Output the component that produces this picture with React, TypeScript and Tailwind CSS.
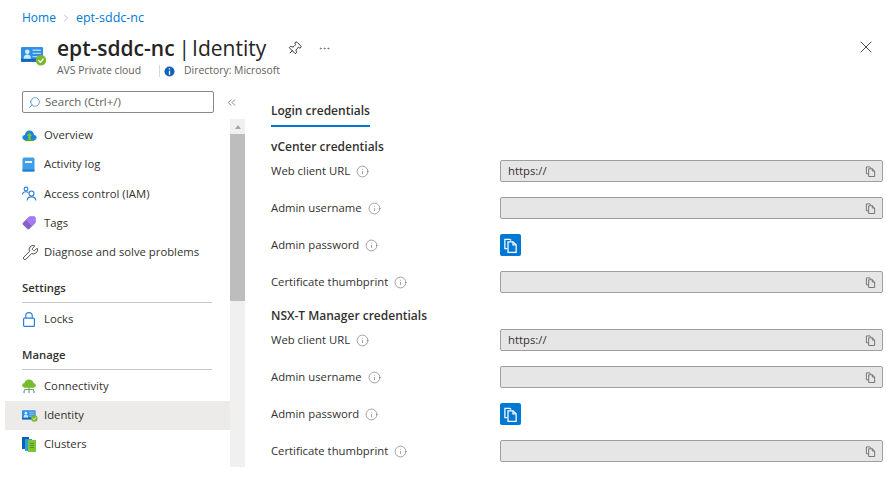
import React from 'react';
import { ChevronRight, ChevronsLeft, Ellipsis, Info, Pin, Search, Wrench, X } from 'lucide-react';

const font = { fontFamily: '"Open Sans", "Noto Sans", sans-serif' };

const CopyIcon: React.FC<{ color: string; size?: number }> = ({ color, size = 12 }) => (
  <svg width={size} height={size} viewBox="0 0 12 12" fill="none" stroke={color} strokeWidth="1">
    <path d="M3.5 8.5H1.5V1H5.5L6.5 2" />
    <path d="M4 3H8L10.5 5.5V11.5H4Z" />
    <path d="M8 3V5.5H10.5" />
  </svg>
);

const IdentityIcon: React.FC<{ scale?: number }> = ({ scale = 1 }) => (
  <svg width={24 * scale} height={20 * scale} viewBox="0 0 24 20">
    <rect x="0" y="2" width="21" height="14" rx="1" fill="#2f8fe6" />
    <rect x="0" y="13" width="21" height="3" fill="#1666b8" />
    <circle cx="6" cy="6.5" r="2.2" fill="#c8ecfb" />
    <path d="M2.5 13c0-3 1.5-4 3.5-4s3.5 1 3.5 4Z" fill="#c8ecfb" />
    <path d="M11 5h8M11 8h8M11 11h5" stroke="#a9d4f5" strokeWidth="1.2" />
    <circle cx="19" cy="14.5" r="5" fill="#7ab92e" />
    <path d="M16.5 14.5l2 2 3-3.5" stroke="#fff" strokeWidth="1.3" fill="none" />
  </svg>
);

const OverviewIcon = () => (
  <svg width="15" height="13" viewBox="0 0 16 14">
    <path d="M3.5 12C1.5 12 .3 10.700.3 9.200.3 7.600 1.500 6.500 3 6.400 3.300 3.600 5.200 1.500 8 1.500s4.700 2 5 4.900c1.500.1 2.700 1.200 2.700 2.800 0 1.500-1.200 2.800-3.200 2.800Z" fill="#1b86d6" />
    <path d="M8 4l3 3.200H9.300V12H6.700V7.200H5Z" fill="#7cc23a" />
    <rect x="3" y="11.500" width="10" height="1.500" fill="#5ea82c" />
  </svg>
);

const ActivityIcon = () => (
  <svg width="13" height="15" viewBox="0 0 13 15">
    <rect x="0.500" y="0.500" width="12" height="14" rx="1.500" fill="#3f9fe8" />
    <rect x="3" y="4" width="7" height="2" fill="#e6f3fc" />
    <rect x="0.500" y="12.500" width="12" height="2" fill="#1f7fcf" />
  </svg>
);

const UsersIcon = () => (
  <svg width="15" height="15" viewBox="0 0 15 15" fill="none" stroke="#2a7fd9" strokeWidth="1.100">
    <circle cx="4" cy="3" r="1.900" />
    <path d="M.6 8.500c0-1.700 1.300-2.700 3.400-2.700 1 0 1.800.2 2.400.7" />
    <circle cx="9.500" cy="7.500" r="2.500" />
    <path d="M5.200 14.500c0-2.400 1.800-3.600 4.300-3.600s4.300 1.200 4.300 3.600" />
  </svg>
);

const TagIcon = () => (
  <svg width="14" height="14" viewBox="0 0 14 14">
    <path d="M8 .5h4c.8 0 1.500.7 1.500 1.500v4c0 .5-.2 1-.5 1.300L7.300 13c-.6.600-1.500.6-2 0L1 8.700c-.6-.6-.6-1.500 0-2L6.700 1C7 .7 7.500.5 8 .5Z" fill="#8661c5" />
    <path d="M8 .5h4c.8 0 1.500.7 1.500 1.500v4c0 .5-.2 1-.5 1.300L10 10 4 4l2.700-3C7 .7 7.500.5 8 .5Z" fill="#a67af4" />
  </svg>
);

const LockIcon = () => (
  <svg width="12" height="15" viewBox="0 0 12 15" fill="none" stroke="#2a7fd9" strokeWidth="1.200" className="ml-[1px]">
    <rect x="0.600" y="6.100" width="10.800" height="8.300" rx="1" />
    <path d="M2.800 6V3.600C2.800 1.800 4.200.6 6 .6s3.200 1.200 3.200 3V6" />
  </svg>
);

const ConnectivityIcon = () => (
  <svg width="14" height="14" viewBox="0 0 14 14">
    <path d="M3 8.800C1.300 8.800.2 7.700.2 6.300.2 5 1.200 4 2.500 3.900 2.800 1.900 4.700.4 7 .4s4.200 1.500 4.500 3.500c1.300.1 2.300 1.100 2.300 2.400 0 1.400-1.100 2.500-2.800 2.500Z" fill="#76bc2d" />
    <path d="M7 8v4M2.500 10.500v1.500M11.500 10.500v1.500M2.500 10.500h9" stroke="#5e9624" strokeWidth=".8" fill="none" />
    <path d="M1 13h2M6 13h2M11 13h2" stroke="#2a7fd9" strokeWidth="1.200" />
  </svg>
);

const ClustersIcon = () => (
  <svg width="14" height="15" viewBox="0 0 14 15">
    <rect x="0" y="0" width="7" height="12" fill="#0f5fb5" />
    <rect x="3" y="2" width="7" height="12" fill="#2a9fd8" />
    <rect x="6" y="3" width="8" height="12" fill="#7fc437" />
    <path d="M8 6.500h4M8 8.500h4M8 10.500h4" stroke="#4d8a1c" strokeWidth=".8" />
  </svg>
);

const NavItem: React.FC<{ icon: React.ReactNode; label: string; active?: boolean }> = ({ icon, label, active }) => (
  <div className={`flex h-[29.4px] items-center pl-[17px] text-[11.3px] text-[#323130] ${active ? 'bg-[#edebe9]' : ''}`}>
    <span className="flex w-[22px] shrink-0 items-center justify-start">{icon}</span>
    <span>{label}</span>
  </div>
);

const SectionLabel: React.FC<{ label: string }> = ({ label }) => (
  <div className="ml-[17px] mr-[18px] mt-[13px] h-[23px] border-b border-[#c8c6c4] text-[11.3px] font-semibold leading-[16px] text-[#323130]">
    {label}
  </div>
);

const CredentialLabel: React.FC<{ label: string }> = ({ label }) => (
  <div className="flex w-[229px] shrink-0 items-center gap-[6px] text-[11.3px] text-[#323130]">
    <span>{label}</span>
    <Info size={13} strokeWidth={1} color="#555" />
  </div>
);

const ReadOnlyField: React.FC<{ value?: string }> = ({ value }) => (
  <div className="flex h-[22px] w-[383px] items-center justify-between rounded-[2px] border border-[#a19f9d] bg-[#e6e6e6] pl-[7px] pr-[6px] text-[11.3px] text-[#323130]">
    <span>{value}</span>
    <CopyIcon color="#6b6b6b" size={11} />
  </div>
);

const CredentialBlock: React.FC<{ title: string }> = ({ title }) => (
  <div>
    <div className="h-[16px] text-[12px] font-semibold leading-[16px] text-[#323130]">{title}</div>
    <div className="mt-[5px] flex flex-col gap-[15px]">
      <div className="flex h-[22px] items-center">
        <CredentialLabel label="Web client URL" />
        <ReadOnlyField value="https://" />
      </div>
      <div className="flex h-[22px] items-center">
        <CredentialLabel label="Admin username" />
        <ReadOnlyField />
      </div>
      <div className="flex h-[22px] items-center">
        <CredentialLabel label="Admin password" />
        <div className="flex h-[22px] w-[21px] items-center justify-center rounded-[2px] bg-[#0078d4]">
          <CopyIcon color="#ffffff" size={15} />
        </div>
      </div>
      <div className="flex h-[22px] items-center">
        <CredentialLabel label="Certificate thumbprint" />
        <ReadOnlyField />
      </div>
    </div>
  </div>
);

const App: React.FC = () => {
  return (
    <div className="h-[478px] w-[893px] overflow-hidden bg-white" style={font}>
      <div className="flex h-[36px] items-center pl-[22px] text-[12.5px] text-[#0078d4]">
        <span className="text-[12px]">Home</span>
        <ChevronRight size={12} strokeWidth={1} color="#777" className="ml-[4px] mr-[4px]" />
        <span>ept-sddc-nc</span>
      </div>

      <div className="flex h-[44px] items-start pl-[21px] pr-[17px]">
        <div className="mt-[9px] w-[36px] shrink-0">
          <IdentityIcon scale={1.05} />
        </div>
        <div>
          <div className="flex h-[26px] items-start">
            <span className="flex whitespace-nowrap text-[21px] leading-[24px] text-[#252423]">
              <span className="font-semibold">ept-sddc-nc</span>
              <span className="ml-[4px]">|</span>
              <span className="ml-[2px]">Identity</span>
            </span>
            <Pin size={15} strokeWidth={1.3} color="#111" className="ml-[21px] mt-[5px] rotate-45" />
            <Ellipsis size={13} strokeWidth={1.2} color="#555" className="ml-[16px] mt-[6px]" />
          </div>
          <div className="flex h-[18px] items-center text-[10.4px] text-[#605e5c]">
            <span className="w-[102px]">AVS Private cloud</span>
            <span className="mr-[3px] h-[12px] w-px bg-[#d8d8d8]" />
            <svg width="11" height="11" viewBox="0 0 11 11" className="ml-[1px]">
              <circle cx="5.5" cy="5.5" r="5" fill="#0f62b8" />
              <path d="M5.500 2.300v1.200M5.500 4.700v4" stroke="#fff" strokeWidth="1.300" />
            </svg>
            <span className="ml-[9px]">Directory: Microsoft</span>
          </div>
        </div>
        <X size={20} strokeWidth={1} color="#222" className="ml-auto mt-[1px]" />
      </div>

      <div className="flex">
        <div className="flex w-[245px] shrink-0 flex-col">
          <div className="flex h-[39px] items-start">
            <div className="ml-[22px] mt-[11px] flex h-[22px] w-[192px] items-center gap-[4px] rounded-[2px] border border-[#8a8886] pl-[5px] text-[11.5px] text-[#605e5c]">
              <Search size={13} strokeWidth={1.3} color="#2a7fd9" className="-scale-x-100" />
              <span>Search (Ctrl+/)</span>
            </div>
            <ChevronsLeft size={13} strokeWidth={1.2} color="#444" className="ml-[11px] mt-[16px]" />
          </div>
          <div className="flex h-[348px]">
            <div className="ml-[5px] w-[225px] pt-[1.5px]">
              <NavItem icon={<OverviewIcon />} label="Overview" />
              <NavItem icon={<ActivityIcon />} label="Activity log" />
              <NavItem icon={<UsersIcon />} label="Access control (IAM)" />
              <NavItem icon={<TagIcon />} label="Tags" />
              <NavItem icon={<Wrench size={17} strokeWidth={1.2} color="#333" />} label="Diagnose and solve problems" />
              <SectionLabel label="Settings" />
              <div className="h-[1.5px]" />
              <NavItem icon={<LockIcon />} label="Locks" />
              <SectionLabel label="Manage" />
              <div className="h-[1px]" />
              <NavItem icon={<ConnectivityIcon />} label="Connectivity" />
              <NavItem icon={<IdentityIcon scale={0.65} />} label="Identity" active />
              <NavItem icon={<ClustersIcon />} label="Clusters" />
            </div>
            <div className="flex w-[15px] flex-col bg-[#f0f0f0]">
              <div className="flex h-[15px] items-center justify-center">
                <div className="h-0 w-0 border-x-[3px] border-b-[4px] border-x-transparent border-b-[#a6a6a6]" />
              </div>
              <div className="h-[167px] bg-[#bdbdbd]" />
            </div>
          </div>
        </div>

        <div className="ml-[26px] flex-1 pt-[21px]">
          <div className="h-[26px] w-[99px] whitespace-nowrap border-b-2 border-[#0078d4] text-[12px] font-semibold leading-[20px] text-[#323130]">
            Login credentials
          </div>
          <div className="mt-[12px] flex flex-col gap-[15px]">
            <CredentialBlock title="vCenter credentials" />
            <CredentialBlock title="NSX-T Manager credentials" />
          </div>
        </div>
      </div>
    </div>
  );
};

export default App;
